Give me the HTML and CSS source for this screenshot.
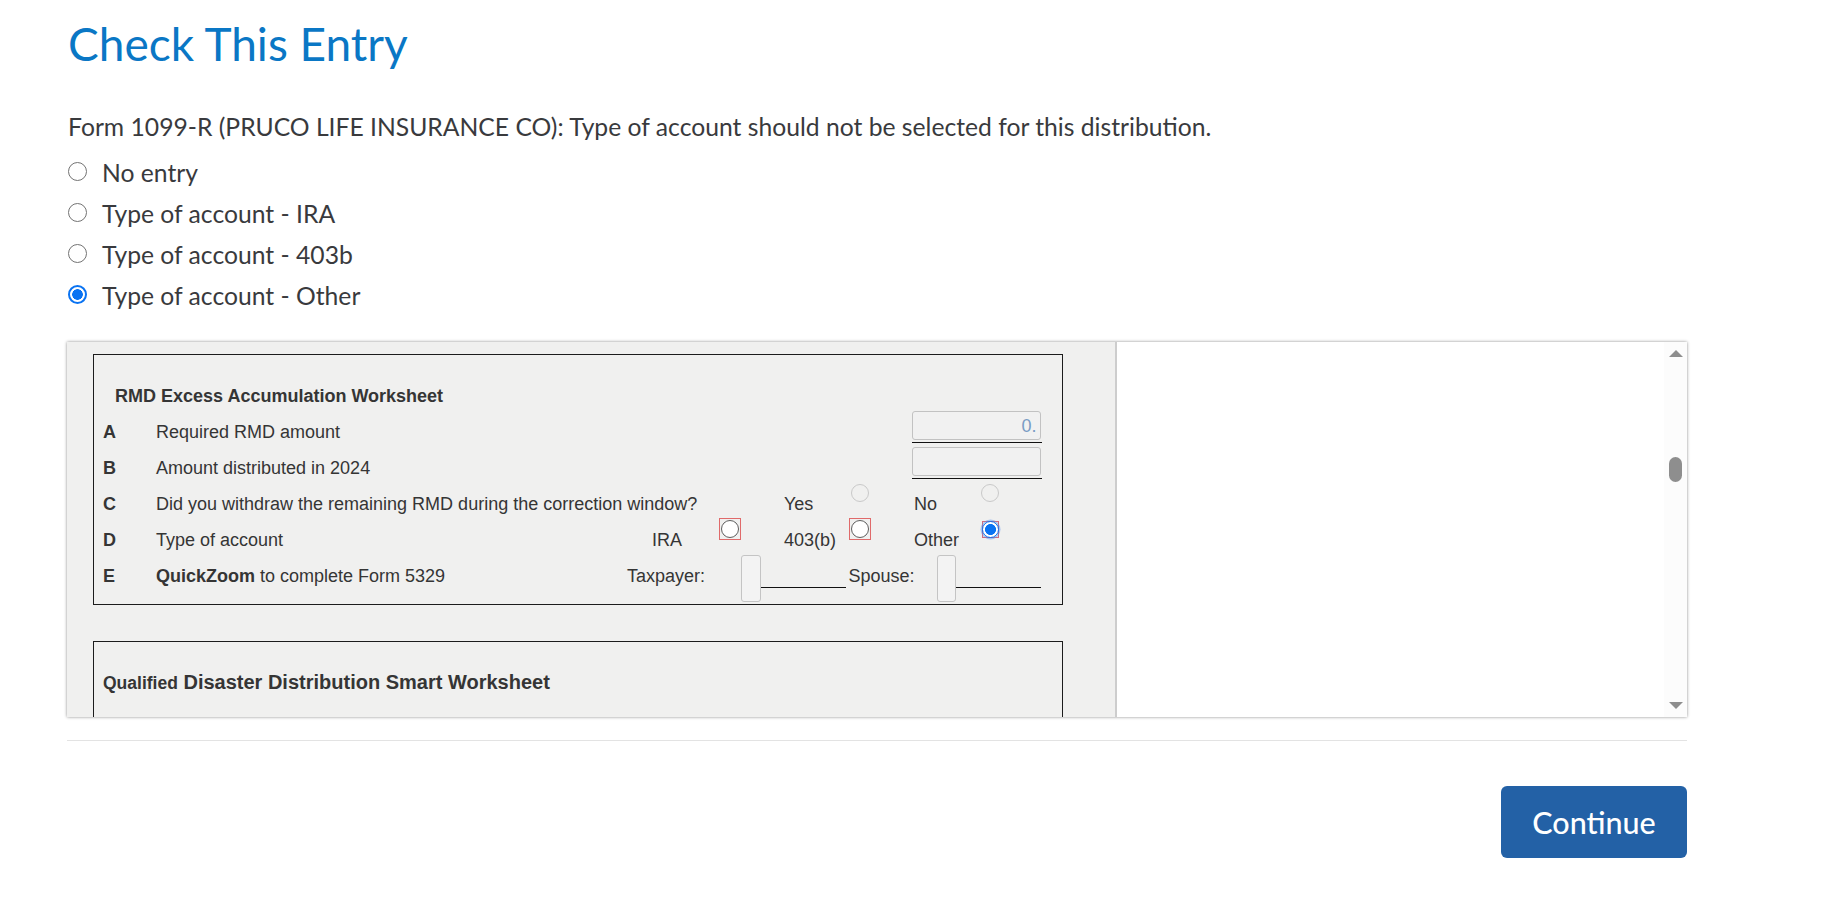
FILE: index.html
```html
<!DOCTYPE html>
<html lang="en">
<head>
<meta charset="utf-8">
<title>Check This Entry</title>
<link rel="stylesheet" href="styles.css">
</head>
<body>
<main class="page">
  <h1 class="title">Check This Entry</h1>
  <p class="desc">Form 1099-R (PRUCO LIFE INSURANCE CO): Type of account should not be selected for this distribution.</p>
  <div class="choices">
    <label class="choice"><span class="radio"></span><span class="choice-text">No entry</span></label>
    <label class="choice"><span class="radio"></span><span class="choice-text">Type of account - IRA</span></label>
    <label class="choice"><span class="radio"></span><span class="choice-text">Type of account - 403b</span></label>
    <label class="choice"><span class="radio radio-on"></span><span class="choice-text">Type of account - Other</span></label>
  </div>

  <section class="panel">
    <div class="ws-pane">
      <div class="ws-box">
        <div class="ws-title">RMD Excess Accumulation Worksheet</div>
        <div class="ws-row">
          <span class="ltr">A</span><span class="txt">Required RMD amount</span>
          <div class="amt"><div class="inp">0.</div></div>
        </div>
        <div class="ws-row">
          <span class="ltr">B</span><span class="txt">Amount distributed in 2024</span>
          <div class="amt"><div class="inp"></div></div>
        </div>
        <div class="ws-row">
          <span class="ltr">C</span><span class="txt txt-wide">Did you withdraw the remaining RMD during the correction window?</span>
          <span class="lbl c3">Yes</span><span class="cell c4"><span class="wr wr-dis"></span></span>
          <span class="lbl c5">No</span><span class="cell c6"><span class="wr wr-dis"></span></span>
        </div>
        <div class="ws-row">
          <span class="ltr">D</span><span class="txt">Type of account</span>
          <span class="lbl c1">IRA</span><span class="cell c2"><span class="errbox"><span class="wr"></span></span></span>
          <span class="lbl c3">403(b)</span><span class="cell c4"><span class="errbox"><span class="wr"></span></span></span>
          <span class="lbl c5">Other</span><span class="cell c6"><span class="errbox errbox-sel"><span class="wr wr-on"></span></span></span>
        </div>
        <div class="ws-row ws-row-e">
          <span class="ltr">E</span><span class="txt-e"><b>QuickZoom</b> to complete Form 5329</span>
          <span class="lbl-e">Taxpayer:</span><span class="qz"></span><span class="uline"></span>
          <span class="lbl-e lbl-sp">Spouse:</span><span class="qz"></span><span class="uline"></span>
        </div>
      </div>
      <div class="ws-box ws-box2">
        <div class="ws-title2"><span class="small-b">Qualified</span> Disaster Distribution Smart Worksheet</div>
      </div>
    </div>
    <div class="side-pane">
      <div class="scrollbar">
        <span class="arrow-up"></span>
        <span class="thumb"></span>
        <span class="sb-fill"></span>
        <span class="arrow-down"></span>
      </div>
    </div>
  </section>

  <hr class="sep">
  <div class="actions">
    <button class="btn" type="button">Continue</button>
  </div>
</main>
</body>
</html>
```

FILE: styles.css
```css
* { box-sizing: border-box; }
html, body { margin: 0; padding: 0; background: #fff; }
body { font-family: Lato, "Open Sans", sans-serif; color: #393a3d; }

.page { width: 1687px; padding: 16px 0 0 67px; }

.title {
  margin: 0;
  font-weight: 400;
  font-size: 46px;
  line-height: 56px;
  color: #0a77c5;
  padding-left: 1px;
}

.desc {
  margin: 40px 0 0 0;
  font-size: 24.7px;
  line-height: 29px;
  padding-left: 1px;
}

.choices { margin-top: 11px; display: flex; flex-direction: column; }
.choice { display: flex; align-items: center; height: 41px; font-size: 24.7px; line-height: 41px; }
.radio {
  width: 19px; height: 19px; border-radius: 50%;
  border: 1.5px solid #737373; background: #fff;
  margin: 0 15px 3px 1px; flex: none;
}
.radio-on {
  border: 2px solid #0a73f2;
  background: radial-gradient(circle, #0a73f2 0 5px, #fff 5.6px);
}

/* panel */
.panel {
  margin-top: 26px;
  width: 1620px; height: 375px;
  display: flex;
  box-shadow: 0 0 3px rgba(0,0,0,.45);
  background: #fff;
  overflow: hidden;
}
.ws-pane {
  width: 1050px; flex: none;
  background: #f0f0ef;
  padding: 12px 0 0 26px;
  overflow: hidden;
  border-right: 2px solid #cdcdcd;
  box-shadow: 1px 0 2px rgba(0,0,0,.12);
  font-family: "Liberation Sans", Arial, sans-serif;
  font-size: 18px;
  color: #353535;
}
.ws-box {
  width: 970px;
  border: 1px solid #1c1c1c;
  padding: 23px 0 10px 0;
}
.ws-title { height: 36px; line-height: 36px; font-weight: 700; padding-left: 21px; }
.ws-row {
  display: grid;
  grid-template-columns: 53px 498px repeat(6, 65px);
  padding-left: 9px;
  height: 36px; line-height: 36px;
  align-items: start;
}
.ltr { font-weight: 700; grid-column: 1; grid-row: 1; }
.txt { grid-column: 2; grid-row: 1; white-space: nowrap; }
.txt-wide { grid-column: 2 / span 3; }
.lbl { grid-row: 1; white-space: nowrap; }
.cell { grid-row: 1; }
.c1 { grid-column: 3; margin-left: -2px; }
.c2 { grid-column: 4; }
.c3 { grid-column: 5; }
.c4 { grid-column: 6; }
.c5 { grid-column: 7; }
.c6 { grid-column: 8; }

.amt {
  grid-column: 7 / span 2; grid-row: 1;
  margin-left: -2px; width: 130px;
  margin-top: -3.5px;
  border-bottom: 1.5px solid #111;
  padding: 0 1.5px 2.5px 0;
}
.inp {
  height: 29px;
  border: 1px solid #c2c2c2;
  border-radius: 3px;
  background: #f1f1f1;
  text-align: right;
  padding-right: 3px;
  font-size: 18px; line-height: 28px;
  color: #7a9cc4;
}

/* worksheet radios */
.wr {
  display: block;
  width: 18px; height: 18px; border-radius: 50%;
  border: 1.5px solid #5e5e5e; background: #fff;
}
.cell .wr-dis {
  margin: -2.5px 0 0 1.5px;
  width: 18.5px; height: 18.5px;
  border: 1.5px solid #c9c9c9; background: transparent;
}
.errbox {
  display: block;
  width: 22px; height: 22px;
  margin-top: -4px;
  border: 1px solid #e06a6a;
  padding: 1px 0 0 1px;
}
.errbox .wr { width: 18px; height: 18px; }
.errbox-sel {
  width: 17px; height: 17px;
  margin: -1.5px 0 0 2.5px;
  padding: 0;
  border-color: #d46a7a;
}
.errbox-sel .wr-on {
  width: 17px; height: 17px;
  margin: -1px 0 0 -1px;
  border: 1.5px solid #0a73f2;
  background: radial-gradient(circle, #0a73f2 0 5.2px, #fff 5.8px);
  box-shadow: 0 0 0 1.5px rgba(80,140,240,.45);
}

/* row E */
.ws-row-e { display: flex; }
.ws-row-e .ltr { width: 53px; flex: none; }
.txt-e { width: 471px; flex: none; white-space: nowrap; }
.txt-e b { font-weight: 700; }
.lbl-e { width: 114px; flex: none; white-space: nowrap; }
.lbl-sp { width: 88px; margin-left: 3px; }
.qz {
  width: 19.5px; height: 47px; flex: none;
  margin-top: -3.3px;
  border: 1px solid #c4c4c4; border-radius: 3px;
  background: #f3f3f3;
}
.uline {
  width: 85px; height: 30px; flex: none;
  border-bottom: 1.5px solid #111;
}

.ws-box2 { margin-top: 36px; height: 200px; padding-top: 22px; }
.ws-title2 { font-weight: 700; font-size: 20px; line-height: 36px; padding-left: 9px; }
.small-b { font-size: 17.5px; }

/* side pane + scrollbar */
.side-pane { flex: 1; display: flex; justify-content: flex-end; background: #fff; }
.scrollbar {
  width: 23px; background: #fcfcfc;
  display: flex; flex-direction: column; align-items: center;
  padding: 8px 0 8px 0;
}
.arrow-up {
  width: 0; height: 0;
  border-left: 7.5px solid transparent; border-right: 7.5px solid transparent;
  border-bottom: 7.5px solid #8e8e8e;
}
.arrow-down {
  width: 0; height: 0;
  border-left: 7.5px solid transparent; border-right: 7.5px solid transparent;
  border-top: 7.5px solid #8e8e8e;
}
.thumb {
  width: 13px; height: 25px; border-radius: 7px;
  background: #8e8e8e; margin-top: 99.5px;
}
.sb-fill { flex: 1; }

.sep {
  margin: 23px 0 0 0;
  width: 1620px; height: 0;
  border: 0; border-top: 1px solid #e3e3e3;
}

.actions { width: 1620px; display: flex; justify-content: flex-end; margin-top: 45px; }
.btn {
  width: 186px; height: 72px;
  background: #2361a6; color: #fff;
  border: 0; border-radius: 6px;
  font-family: Lato, "Open Sans", sans-serif;
  font-size: 30.5px; font-weight: 500;
  padding: 0;
}
```
